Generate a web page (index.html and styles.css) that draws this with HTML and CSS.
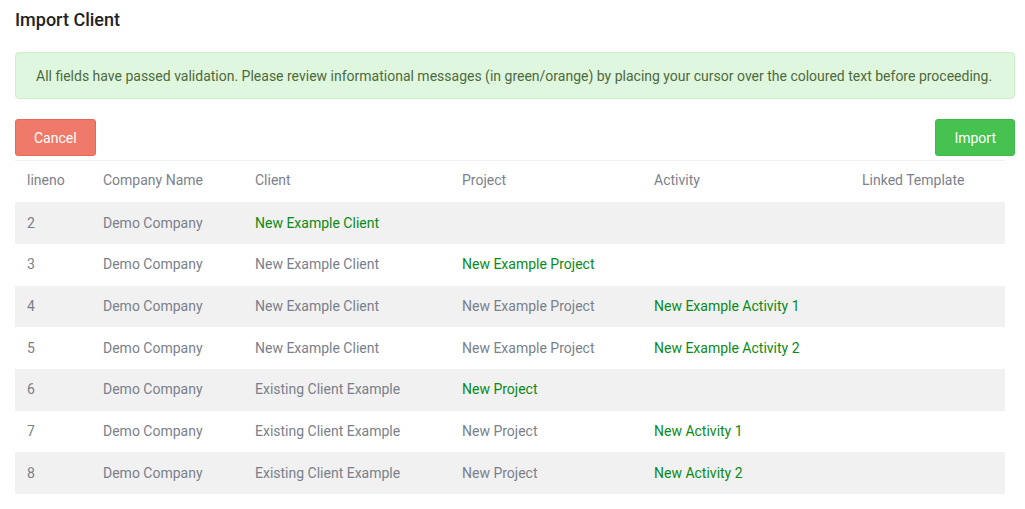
FILE: index.html
```html
<!DOCTYPE html>
<html lang="en">
<head>
<meta charset="utf-8">
<title>Import Client</title>
<link rel="stylesheet" href="styles.css">
</head>
<body>
<main class="page">
  <h1 class="page-title">Import Client</h1>
  <div class="alert alert-success">All fields have passed validation. Please review informational messages (in green/orange) by placing your cursor over the coloured text before proceeding.</div>
  <div class="actions">
    <button class="btn btn-cancel" type="button">Cancel</button>
    <button class="btn btn-import" type="button">Import</button>
  </div>
  <table class="import-table">
    <colgroup>
      <col class="c-line"><col class="c-company"><col class="c-client"><col class="c-project"><col class="c-activity"><col class="c-template">
    </colgroup>
    <thead>
      <tr><th>lineno</th><th>Company Name</th><th>Client</th><th>Project</th><th>Activity</th><th>Linked Template</th></tr>
    </thead>
    <tbody>
      <tr><td>2</td><td>Demo Company</td><td class="new">New Example Client</td><td></td><td></td><td></td></tr>
      <tr><td>3</td><td>Demo Company</td><td>New Example Client</td><td class="new">New Example Project</td><td></td><td></td></tr>
      <tr><td>4</td><td>Demo Company</td><td>New Example Client</td><td>New Example Project</td><td class="new">New Example Activity 1</td><td></td></tr>
      <tr><td>5</td><td>Demo Company</td><td>New Example Client</td><td>New Example Project</td><td class="new">New Example Activity 2</td><td></td></tr>
      <tr><td>6</td><td>Demo Company</td><td>Existing Client Example</td><td class="new">New Project</td><td></td><td></td></tr>
      <tr><td>7</td><td>Demo Company</td><td>Existing Client Example</td><td>New Project</td><td class="new">New Activity 1</td><td></td></tr>
      <tr><td>8</td><td>Demo Company</td><td>Existing Client Example</td><td>New Project</td><td class="new">New Activity 2</td><td></td></tr>
    </tbody>
  </table>
</main>
</body>
</html>
```

FILE: styles.css
```css
* { box-sizing: border-box; }

html, body {
  margin: 0;
  padding: 0;
  background: #ffffff;
}

body {
  font-family: Roboto, "Liberation Sans", sans-serif;
  font-size: 14px;
  color: #7a7f8c;
}

.page {
  padding: 9px 10px 0 15px;
}

.page-title {
  margin: 0;
  font-size: 18px;
  font-weight: 500;
  line-height: 22px;
  color: #222222;
}

.alert {
  margin-top: 21px;
  padding: 13px 20px 12px;
  line-height: 20px;
  border-radius: 4px;
}

.alert-success {
  background: #dff6df;
  border: 1px solid #cbeecb;
  color: #4d6b3c;
}

.actions {
  display: flex;
  justify-content: space-between;
  margin-top: 20px;
}

.btn {
  height: 37px;
  padding: 0 18px;
  border-radius: 3px;
  border: 1px solid transparent;
  font-family: inherit;
  font-size: 14px;
  color: #ffffff;
  cursor: pointer;
}

.btn-cancel {
  background: #ef7a6a;
  border-color: #e4695a;
}

.btn-import {
  background: #46c250;
  border-color: #41b84b;
  padding: 0 18px;
}

.import-table {
  margin-top: 4px;
  width: 990px;
  border-collapse: collapse;
  border-top: 1px solid #f0f0f0;
  table-layout: fixed;
}

.c-line { width: 76px; }
.c-company { width: 152px; }
.c-client { width: 207px; }
.c-project { width: 192px; }
.c-activity { width: 208px; }
.c-template { width: 155px; }

.import-table th,
.import-table td {
  height: 41.7px;
  padding: 0 12px 1px;
  text-align: left;
  font-weight: 400;
  line-height: 20px;
  white-space: nowrap;
  vertical-align: middle;
}

.import-table th {
  color: #7d818b;
  padding-bottom: 4px;
}

.import-table tbody tr:nth-child(odd) {
  background: #f1f1f1;
}

.import-table td.new {
  color: #0a8a16;
}
```
